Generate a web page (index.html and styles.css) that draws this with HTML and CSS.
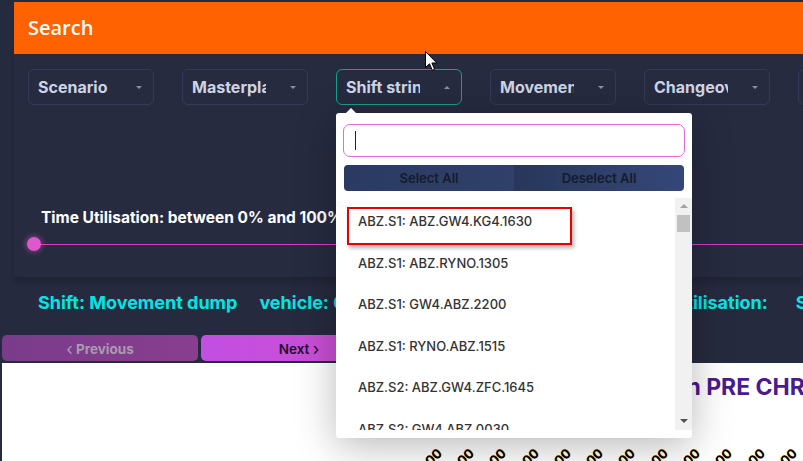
FILE: index.html
```html
<!DOCTYPE html>
<html>
<head>
<meta charset="utf-8">
<title>Search</title>
<link rel="stylesheet" href="styles.css">
</head>
<body>
<div class="page">
  <section class="card">
    <header class="card-header">Search</header>
    <div class="card-body">
      <div class="filters">
        <div class="select"><span class="select-label">Scenario</span><span class="caret"></span></div>
        <div class="select"><span class="select-label">Masterplan</span><span class="caret"></span></div>
        <div class="select select-open"><span class="select-label">Shift string</span><span class="caret caret-up"></span></div>
        <div class="select"><span class="select-label">Movement</span><span class="caret"></span></div>
        <div class="select"><span class="select-label">Changeover</span><span class="caret"></span></div>
        <div class="select"><span class="select-label">Vehicle</span><span class="caret"></span></div>
      </div>
      <div class="range">
        <div class="range-label">Time Utilisation: between 0% and 100%</div>
        <div class="range-track"><span class="range-thumb"></span></div>
      </div>
    </div>
  </section>

  <div class="stats">
    <span class="stat">Shift: Movement dump</span>
    <span class="stat">vehicle: 0</span>
    <span class="stat">route: 0</span>
    <span class="stat">Time Utilisation:</span>
    <span class="stat stat-shift">Shift Utilisation:</span>
    <span class="stat stat-end">Shift Count:</span>
  </div>

  <div class="pager">
    <button class="pager-btn pager-prev"><span class="chev">&#x2039;</span> Previous</button>
    <button class="pager-btn pager-next">Next <span class="chev">&#x203A;</span></button>
  </div>

  <div class="chart">
    <h2 class="chart-title">Shift Time Utilisation PRE CHRISTMAS</h2>
    <div class="chart-axis">
      <span class="tick"><span class="tick-label">ABZ.1600</span></span>
      <span class="tick"><span class="tick-label">ABZ.1600</span></span>
      <span class="tick"><span class="tick-label">ABZ.1600</span></span>
      <span class="tick"><span class="tick-label">ABZ.1600</span></span>
      <span class="tick"><span class="tick-label">ABZ.1600</span></span>
      <span class="tick"><span class="tick-label">ABZ.1600</span></span>
      <span class="tick"><span class="tick-label">ABZ.1600</span></span>
      <span class="tick"><span class="tick-label">ABZ.1600</span></span>
      <span class="tick"><span class="tick-label">ABZ.1600</span></span>
      <span class="tick"><span class="tick-label">ABZ.1600</span></span>
      <span class="tick"><span class="tick-label">ABZ.1600</span></span>
      <span class="tick"><span class="tick-label">ABZ.1600</span></span>
    </div>
  </div>

  <div class="dropdown">
    <span class="dropdown-arrow"></span>
    <div class="dropdown-search"><span class="text-caret"></span></div>
    <div class="dropdown-actions">
      <button class="action-btn">Select All</button>
      <button class="action-btn action-btn-right">Deselect All</button>
    </div>
    <div class="dropdown-list">
      <ul class="options">
        <li class="option">ABZ.S1: ABZ.GW4.KG4.1630</li>
        <li class="option">ABZ.S1: ABZ.RYNO.1305</li>
        <li class="option">ABZ.S1: GW4.ABZ.2200</li>
        <li class="option">ABZ.S1: RYNO.ABZ.1515</li>
        <li class="option">ABZ.S2: ABZ.GW4.ZFC.1645</li>
        <li class="option">ABZ.S2: GW4.ABZ.0030</li>
      </ul>
      <div class="scrollbar">
        <span class="sb-arrow sb-up"></span>
        <span class="sb-thumb"></span>
        <span class="sb-arrow sb-down"></span>
      </div>
    </div>
    <span class="highlight"></span>
  </div>

  <svg class="cursor" width="13" height="21" viewBox="0 0 13 21">
    <path d="M0.5 0.5 L0.5 16.5 L4.5 12.8 L7.3 19.3 L9.6 18.3 L6.9 12 L11.8 12 Z" fill="#fff" stroke="#000" stroke-width="1"/>
  </svg>
</div>
</body>
</html>
```

FILE: styles.css
```css
* { box-sizing: border-box; }
html, body {
  margin: 0;
  padding: 0;
  background: #262a3e;
  width: 803px;
  height: 461px;
  overflow: hidden;
}
body {
  font-family: "Inter", "Noto Sans", sans-serif;
}
.page {
  position: relative;
  padding-top: 2px;
  height: 461px;
}

/* card */
.card {
  margin-left: 14px;
  background: #272b40;
  box-shadow: 0 6px 4px rgba(0, 0, 0, 0.13);
  position: relative;
}
.card-header {
  height: 52px;
  background: #ff6200;
  color: #fff;
  font-family: "Open Sans", sans-serif;
  font-weight: 600;
  font-size: 20px;
  line-height: 52px;
  padding-left: 14px;
}
.card-body {
  padding: 15px 0 26px 14px;
  overflow: hidden;
}
.filters {
  display: flex;
  gap: 28px;
}
.select {
  flex: 0 0 126px;
  height: 36px;
  border: 1px solid #343a58;
  border-radius: 6px;
  display: flex;
  align-items: center;
  padding: 0 9px 0 9px;
  justify-content: space-between;
}
.select-open {
  border-color: #18a084;
}
.select-label {
  width: 74px;
  overflow: hidden;
  white-space: nowrap;
  color: #cdd4e4;
  font-weight: 700;
  font-size: 16px;
}
.caret {
  width: 0;
  height: 0;
  border-left: 3.5px solid transparent;
  border-right: 3.5px solid transparent;
  border-top: 3.5px solid #8b90a3;
  margin-right: 2px;
}
.caret-up {
  border-top: 0;
  border-bottom: 3.5px solid #8b90a3;
}

.range {
  margin-top: 104px;
  margin-left: -1px;
}
.range-label {
  padding-left: 14px;
  color: #fff;
  font-weight: 700;
  font-size: 15.5px;
  line-height: 18px;
  white-space: nowrap;
}
.range-track {
  margin-top: 10px;
  height: 14px;
  position: relative;
  display: flex;
  align-items: center;
}
.range-track::before {
  content: "";
  flex: 1;
  height: 1px;
  margin-left: 7px;
  background: #d83fc4;
}
.range-thumb {
  position: absolute;
  left: 0;
  top: 0;
  width: 14px;
  height: 14px;
  border-radius: 50%;
  background: #dd58cc;
  box-shadow: 0 0 5px 2px rgba(221, 88, 204, 0.35);
}

/* stats */
.stats {
  margin-top: 8px;
  height: 50px;
  width: 803px;
  padding-left: 38px;
  display: flex;
  gap: 22px;
  white-space: nowrap;
  overflow: hidden;
  color: #00e6e6;
  font-weight: 700;
  font-size: 18px;
  line-height: 36px;
}
.stat {
  flex: 0 0 auto;
}
.stat-shift {
  margin-left: 5px;
}
.stat-end {
  margin-left: 6px;
}

/* pager */
.pager {
  display: flex;
  gap: 3px;
  padding-left: 2px;
  height: 26px;
}
.pager-btn {
  width: 196px;
  height: 26px;
  border: 0;
  border-radius: 5px;
  font-family: "Inter", sans-serif;
  font-size: 13.5px;
  padding: 0;
}
.pager-prev {
  background: linear-gradient(90deg, #7a3b8b, #893e8e);
  color: #a99bb2;
  font-weight: 700;
}
.pager-next {
  background: linear-gradient(90deg, #c14fe2, #d04ecf);
  color: #1b1230;
  font-weight: 600;
}
.chev {
  font-size: 17px;
  font-weight: 400;
  position: relative;
  top: 1px;
}

/* chart */
.chart {
  margin: 2px 0 0 2px;
  background: #fff;
  height: 98px;
  position: relative;
  overflow: hidden;
}
.chart-title {
  margin: 0;
  padding: 9px 0 0 466px;
  white-space: nowrap;
  color: #4b1a8e;
  font-weight: 700;
  font-size: 23px;
  line-height: 30px;
}
.chart-axis {
  display: flex;
  margin-top: 43px;
  padding-left: 419px;
}
.tick {
  flex: 0 0 32.3px;
  height: 20px;
  position: relative;
}
.tick-label {
  position: absolute;
  right: 20px;
  top: 0;
  transform: rotate(-45deg);
  transform-origin: 100% 0;
  color: #000;
  font-weight: 700;
  font-size: 13px;
  white-space: nowrap;
  text-shadow: 0.6px 0 #f2a100;
}

/* dropdown */
.dropdown {
  position: absolute;
  left: 336px;
  top: 113px;
  width: 356px;
  height: 325px;
  background: #fff;
  border-radius: 3px;
  padding: 11px 7px 8px;
  box-shadow: 0 8px 40px rgba(0, 0, 0, 0.28);
}
.dropdown-arrow {
  position: absolute;
  left: 10px;
  top: -5px;
  width: 0;
  height: 0;
  border-left: 5px solid transparent;
  border-right: 5px solid transparent;
  border-bottom: 5px solid #fff;
}
.dropdown-search {
  height: 33px;
  border: 1px solid #e06ad6;
  border-radius: 7px;
  display: flex;
  align-items: center;
  padding-left: 11px;
}
.text-caret {
  width: 1px;
  height: 19px;
  background: #1a2233;
}
.dropdown-actions {
  display: flex;
  margin: 8px 1px 0;
  height: 26px;
  border-radius: 4px;
  overflow: hidden;
}
.action-btn {
  flex: 1;
  border: 0;
  padding: 0;
  background: linear-gradient(90deg, #2b3a62, #31406a);
  color: #151a2c;
  font-family: "Inter", sans-serif;
  font-size: 13px;
  font-weight: 600;
}
.action-btn-right {
  background: linear-gradient(90deg, #283759, #354779);
}
.dropdown-list {
  display: flex;
  margin: 7px -7px 0;
  height: 232px;
}
.options {
  flex: 1;
  list-style: none;
  margin: 0;
  padding: 3px 0 0;
  overflow: hidden;
}
.option {
  height: 41.5px;
  line-height: 41.5px;
  padding-left: 22px;
  color: #333;
  font-size: 13px;
  font-weight: 500;
  white-space: nowrap;
}
.scrollbar {
  flex: 0 0 17px;
  background: #f1f1f1;
  display: flex;
  flex-direction: column;
  align-items: center;
}
.sb-arrow {
  width: 0;
  height: 0;
  border-left: 4px solid transparent;
  border-right: 4px solid transparent;
}
.sb-up {
  margin-top: 6px;
  border-bottom: 4px solid #a3a3a3;
}
.sb-thumb {
  margin-top: 7px;
  width: 13px;
  height: 17px;
  background: #c1c1c1;
}
.sb-down {
  margin-top: auto;
  margin-bottom: 7px;
  border-top: 4px solid #505050;
}
.highlight {
  position: absolute;
  left: 11px;
  top: 94px;
  width: 225px;
  height: 38px;
  border: 2px solid #e60000;
  box-shadow: 2px 3px 4px rgba(0, 0, 0, 0.3);
}

.cursor {
  position: absolute;
  left: 425px;
  top: 51px;
}
```
